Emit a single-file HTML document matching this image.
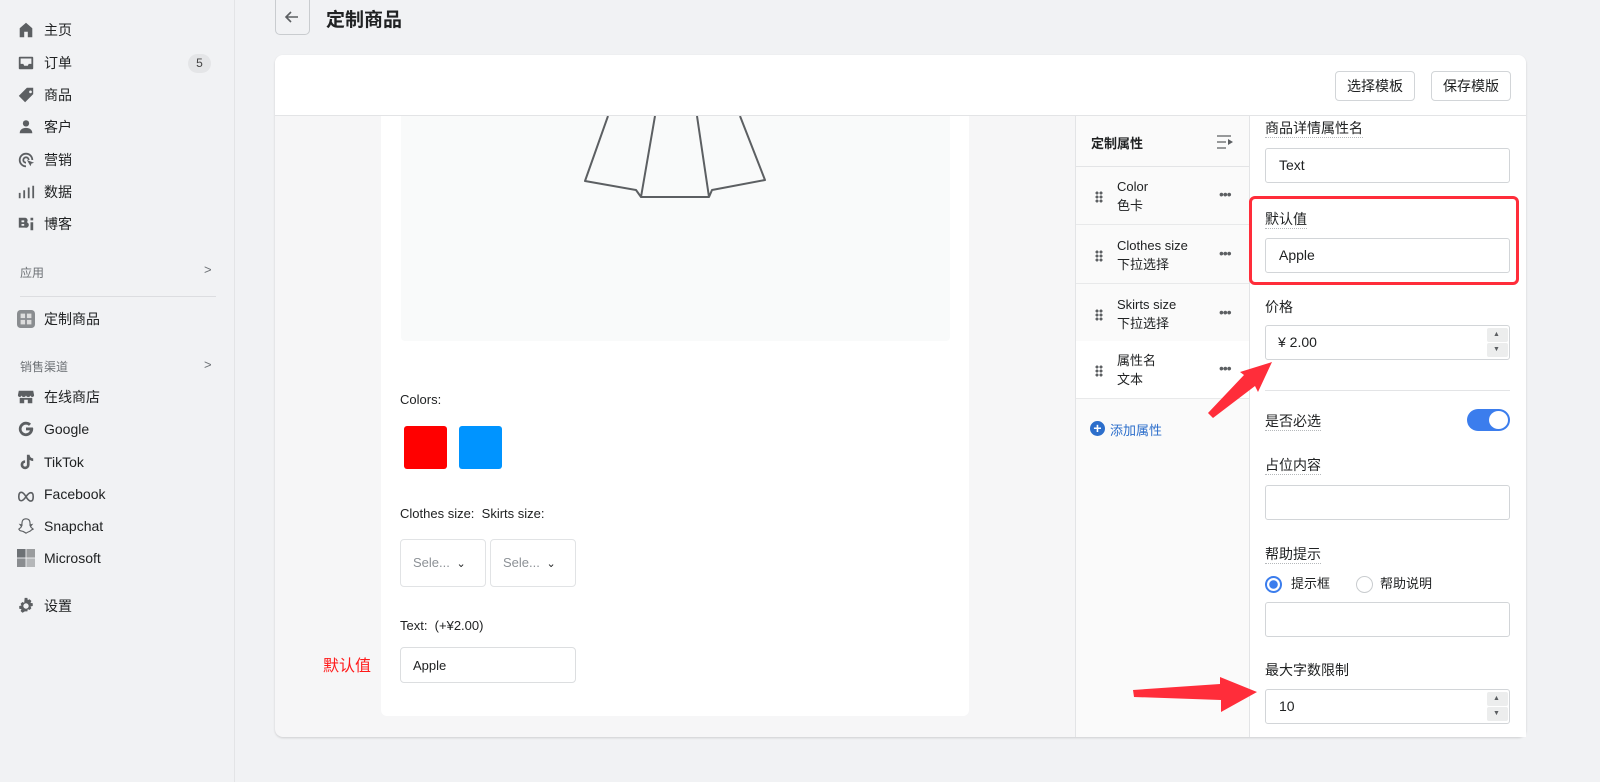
<!DOCTYPE html>
<html><head><meta charset="utf-8">
<style>
*{box-sizing:border-box;margin:0;padding:0}
body{width:1600px;height:782px;background:#f1f2f4;font-family:"Liberation Sans","Noto Sans CJK SC",sans-serif;font-size:14px;color:#202223;position:relative;overflow:hidden}
.a{position:absolute}
.nav{left:0;top:0;width:235px;height:782px;border-right:1px solid #e3e4e6;background:#f1f2f4}
.ni{position:absolute;left:17px;height:20px;display:flex;align-items:center;font-size:14px;color:#202223}
.ni svg{width:18px;height:18px;margin-right:9px;fill:#5c5f62}
.sec{position:absolute;left:20px;font-size:12px;color:#6d7175}
.chev{position:absolute;left:204px;font-size:13px;color:#6d7175}
.box{border:1px solid #d2d5d8;border-radius:4px;background:#fff}
.lbl{position:absolute;left:1265px;font-size:14px;color:#202223;border-bottom:1px dotted #b5b8bb;line-height:18px}
.inp{position:absolute;left:1265px;width:245px;height:35px;border:1px solid #d2d5d8;border-radius:3px;background:#fff;font-size:14px;padding-left:13px;line-height:33px}
.row{position:absolute;left:1076px;width:173px;height:58px;border-bottom:1px solid #e8e9ea;background:#fafafa}
.row .t{position:absolute;left:41px;top:10px;font-size:13px;line-height:19px;color:#202223}
.row .d{position:absolute;left:19px;top:24px;width:8px;height:12px;background:radial-gradient(circle,#5c5f62 1.4px,transparent 1.6px) 0 0/4px 4px}
.row .m{position:absolute;left:143px;top:19px;font-size:14px;color:#5c5f62;letter-spacing:-1px}
.spin{position:absolute;width:21px;height:14px;background:#eceded;border-radius:2px}
</style></head><body>
<div class="a nav">
 <div class="ni" style="top:20px"><svg viewBox="0 0 20 20"><path d="M10 2 L3 8 V18 H8 V12 H12 V18 H17 V8Z"/></svg>主页</div>
 <div class="ni" style="top:53px"><svg viewBox="0 0 20 20"><path d="M3 3h14a1 1 0 011 1v12a1 1 0 01-1 1H3a1 1 0 01-1-1V4a1 1 0 011-1zm1 2v6h3l1 2h4l1-2h3V5z"/></svg>订单</div>
 <div class="a" style="left:188px;top:54px;width:23px;height:19px;border-radius:10px;background:#e4e5e7;font-size:12px;text-align:center;line-height:19px;color:#444">5</div>
 <div class="ni" style="top:85px"><svg viewBox="0 0 20 20"><path d="M11 2h7v7l-9 9-7-7zm4 3a1.5 1.5 0 100 3 1.5 1.5 0 000-3z"/></svg>商品</div>
 <div class="ni" style="top:117px"><svg viewBox="0 0 20 20"><circle cx="10" cy="6" r="3.5"/><path d="M3 17c0-4 3-6 7-6s7 2 7 6z"/></svg>客户</div>
 <div class="ni" style="top:150px"><svg viewBox="0 0 20 20"><path d="M10 2a8 8 0 018 8h-2a6 6 0 10-6 6v2a8 8 0 010-16zm0 4a4 4 0 014 4h-2a2 2 0 10-2 2v2a4 4 0 010-8zm1 4l8 3-3 1-1 3z"/></svg>营销</div>
 <div class="ni" style="top:182px"><svg viewBox="0 0 20 20"><path d="M2 11h2v6H2zm5-3h2v9H7zm5-3h2v12h-2zm5-2h2v14h-2z"/></svg>数据</div>
 <div class="ni" style="top:214px"><svg viewBox="0 0 20 20"><path d="M2 3h7a3 3 0 012 5 3 3 0 01-2 6H2zm3 3v2h3V6zm0 4v2h3v-2zM15 3h3v3h-3zm0 5h3v9h-3z"/></svg>博客</div>
 <div class="sec" style="top:264px">应用</div><div class="chev" style="top:262px">&gt;</div>
 <div class="a" style="left:20px;top:296px;width:196px;height:1px;background:#dcdde0"></div>
 <div class="ni" style="top:309px"><svg viewBox="0 0 20 20" style="fill:#8a8d90"><rect x="0" y="0" width="20" height="20" rx="4"/><rect x="4" y="4" width="5" height="5" fill="#ddd"/><rect x="11" y="4" width="5" height="5" fill="#ddd"/><rect x="4" y="11" width="5" height="5" fill="#ddd"/><rect x="11" y="11" width="5" height="5" fill="#ddd"/></svg>定制商品</div>
 <div class="sec" style="top:358px">销售渠道</div><div class="chev" style="top:357px">&gt;</div>
 <div class="ni" style="top:387px"><svg viewBox="0 0 20 20"><path d="M2 3h16l1 5c0 1-1 2-2 2s-2-1-2-2c0 1-1 2-2.5 2S10 9 10 8c0 1-1 2-2.5 2S5 9 5 8c0 1-1 2-2 2S1 9 1 8zm1 8h14v6h-5v-4H8v4H3z"/></svg>在线商店</div>
 <div class="ni" style="top:419px"><svg viewBox="0 0 20 20"><path d="M17.6 8.3H10v3.2h4.4A4.8 4.8 0 1110 5.2a4.7 4.7 0 013.3 1.3l2.3-2.3A8 8 0 1018 10c0-.6 0-1.1-.4-1.7z"/></svg>Google</div>
 <div class="ni" style="top:452px"><svg viewBox="0 0 20 20"><path d="M11 2h3a4 4 0 004 4v3a7 7 0 01-4-1.3V13a5 5 0 11-5-5v3a2 2 0 102 2z"/></svg>TikTok</div>
 <div class="ni" style="top:484px"><svg viewBox="0 0 20 20" style="fill:none;stroke:#5c5f62;stroke-width:1.8"><path d="M2 13c0-6 4-7 8 0s8 6 8 0-4-6-8 0-8 6-8 0z"/></svg>Facebook</div>
 <div class="ni" style="top:516px"><svg viewBox="0 0 20 20" style="fill:none;stroke:#5c5f62;stroke-width:1.3"><path d="M10 2c3 0 4.5 2 4.5 5v2l2-.5-1.5 2c1 2 3 2.5 3 3-1 .6-2 .5-2.5 1.5S13 16 10 18c-3-2-3-2-5.5-2.5S3 14 2 13.5c0-.5 2-1 3-3L3.5 8.5l2 .5V7C5.5 4 7 2 10 2z"/></svg>Snapchat</div>
 <div class="ni" style="top:548px"><svg viewBox="0 0 20 20"><rect x="0" y="0" width="9.5" height="9.5" fill="#6d7175"/><rect x="10.5" y="0" width="9.5" height="9.5" fill="#9a9c9e"/><rect x="0" y="10.5" width="9.5" height="9.5" fill="#8a8d90"/><rect x="10.5" y="10.5" width="9.5" height="9.5" fill="#b5b7b9"/></svg>Microsoft</div>
 <div class="ni" style="top:596px"><svg viewBox="0 0 20 20"><path d="M8.5 1h3l.5 2.5 2-1 2 2-1 2 2.5.5v3l-2.5.5 1 2-2 2-2-1-.5 2.5h-3L8 16.5l-2 1-2-2 1-2L2.5 13v-3L5 9.5l-1-2 2-2 2 1zM10 7a3 3 0 100 6 3 3 0 000-6z"/></svg>设置</div>
</div>

<div class="a box" style="left:275px;top:0;width:35px;height:35px;border-radius:0 0 5px 5px;border-top:none;background:#f1f2f4;border-color:#c9cccf"></div>
<svg class="a" style="left:283px;top:8px" width="18" height="18" viewBox="0 0 18 18"><path d="M15 9H3M8 4L3 9l5 5" stroke="#5c5f62" stroke-width="1.6" fill="none"/></svg>
<div class="a" style="left:326px;top:5px;font-size:19px;font-weight:600">定制商品</div>

<div class="a" style="left:275px;top:55px;width:1251px;height:682px;background:#f6f6f7;border-radius:8px;box-shadow:0 1px 2px rgba(0,0,0,.15);overflow:hidden">
 <div class="a" style="left:0;top:0;width:1251px;height:61px;background:#fff;border-bottom:1px solid #e3e4e6"></div>
 <div class="a box" style="left:1060px;top:16px;width:80px;height:30px;text-align:center;line-height:28px;font-size:14px">选择模板</div>
 <div class="a box" style="left:1156px;top:16px;width:80px;height:30px;text-align:center;line-height:28px;font-size:14px">保存模版</div>
 <div class="a" style="left:106px;top:61px;width:588px;height:600px;background:#fff;border-radius:0 0 6px 6px"></div>
 <div class="a" style="left:126px;top:61px;width:549px;height:225px;background:#f9fafa;border-radius:0 0 4px 4px"></div>
 <svg class="a" style="left:126px;top:61px" width="549" height="90" viewBox="0 0 549 90"><g stroke="#5c5f62" stroke-width="2" fill="none" stroke-linejoin="round"><path d="M207 0L184 65L235 74L240 81L308 81L311 74L364 64L339 0"/><path d="M254 0L240 81M296 0L308 81"/></g></svg>
 <div class="a" style="left:125px;top:337px;font-size:13px">Colors:</div>
 <div class="a" style="left:129px;top:371px;width:43px;height:43px;background:#ff0000;border-radius:3px"></div>
 <div class="a" style="left:184px;top:371px;width:43px;height:43px;background:#0094ff;border-radius:3px"></div>
 <div class="a" style="left:125px;top:451px;font-size:13px">Clothes size:&nbsp;&nbsp;Skirts size:</div>
 <div class="a box" style="left:125px;top:484px;width:86px;height:48px;border-color:#e1e3e5;color:#8c9196;font-size:13px;padding:15px 0 0 12px">Sele... <span style="color:#202223;font-size:11px;margin-left:3px">&#8964;</span></div>
 <div class="a box" style="left:215px;top:484px;width:86px;height:48px;border-color:#e1e3e5;color:#8c9196;font-size:13px;padding:15px 0 0 12px">Sele... <span style="color:#202223;font-size:11px;margin-left:3px">&#8964;</span></div>
 <div class="a" style="left:125px;top:563px;font-size:13px">Text:&nbsp;&nbsp;(+¥2.00)</div>
 <div class="a box" style="left:125px;top:592px;width:176px;height:36px;border-color:#dcdee0;font-size:13px;padding:10px 0 0 12px">Apple</div>
 <div class="a" style="left:48px;top:597px;font-size:16px;color:#ff1a1a">默认值</div>
</div>

<div class="a" style="left:1075px;top:116px;width:1px;height:621px;background:#e3e4e6"></div>
<div class="a" style="left:1076px;top:116px;width:173px;height:621px;background:#fafafa"></div>
<div class="a" style="left:1249px;top:116px;width:277px;height:621px;background:#fff;border-left:1px solid #e3e4e6"></div>
<div class="a" style="left:1076px;top:116px;width:173px;height:51px;border-bottom:1px solid #e3e4e6"></div>
<div class="a" style="left:1091px;top:133px;font-size:13px;font-weight:600">定制属性</div>
<svg class="a" style="left:1216px;top:134px" width="18" height="16" viewBox="0 0 18 16"><path d="M1 2h14M1 8h9M1 14h9" stroke="#5c5f62" stroke-width="1.3"/><path d="M12 5l5 3-5 3z" fill="#5c5f62"/></svg>
<div class="row" style="top:167px"><div class="d"></div><div class="t">Color<br>色卡</div><div class="m">•••</div></div>
<div class="row" style="top:226px"><div class="d"></div><div class="t">Clothes size<br>下拉选择</div><div class="m">•••</div></div>
<div class="row" style="top:285px"><div class="d"></div><div class="t">Skirts size<br>下拉选择</div><div class="m">•••</div></div>
<div class="row" style="top:341px;background:#fff;height:58px"><div class="d"></div><div class="t">属性名<br>文本</div><div class="m">•••</div></div>
<div class="a" style="left:1090px;top:421px;width:15px;height:15px;border-radius:50%;background:#2c6ecb;color:#fff;font-size:14px;line-height:14px;text-align:center;font-weight:bold">+</div>
<div class="a" style="left:1110px;top:420px;font-size:13px;color:#2c6ecb">添加属性</div>

<div class="lbl" style="top:119px">商品详情属性名</div>
<div class="inp" style="top:148px">Text</div>
<div class="a" style="left:1249px;top:196px;width:270px;height:89px;border:3px solid #ff2d3a;border-radius:6px"></div>
<div class="lbl" style="top:210px">默认值</div>
<div class="inp" style="top:238px">Apple</div>
<div class="lbl" style="top:298px;border:none">价格</div>
<div class="inp" style="top:325px;padding-left:12px">¥ 2.00</div>
<div class="spin" style="left:1487px;top:328px"></div><div class="spin" style="left:1487px;top:343px"></div>
<div class="a" style="left:1493px;top:331px;font-size:7px;color:#5c5f62">▲</div><div class="a" style="left:1493px;top:346px;font-size:7px;color:#5c5f62">▼</div>
<div class="a" style="left:1265px;top:390px;width:245px;height:1px;background:#e3e4e6"></div>
<div class="lbl" style="top:412px">是否必选</div>
<div class="a" style="left:1467px;top:409px;width:43px;height:22px;border-radius:11px;background:#3b7ded"></div>
<div class="a" style="left:1489px;top:411px;width:19px;height:18px;border-radius:50%;background:#fff"></div>
<div class="lbl" style="top:456px">占位内容</div>
<div class="inp" style="top:485px"></div>
<div class="lbl" style="top:545px">帮助提示</div>
<div class="a" style="left:1265px;top:576px;width:17px;height:17px;border-radius:50%;border:2px solid #3b7ded;background:radial-gradient(circle,#3b7ded 4px,#fff 4.5px)"></div>
<div class="a" style="left:1291px;top:575px;font-size:13px;line-height:18px">提示框</div>
<div class="a" style="left:1356px;top:576px;width:17px;height:17px;border-radius:50%;border:1px solid #c9cccf;background:#fff"></div>
<div class="a" style="left:1380px;top:575px;font-size:13px;line-height:18px">帮助说明</div>
<div class="inp" style="top:602px"></div>
<div class="lbl" style="top:661px;border:none">最大字数限制</div>
<div class="inp" style="top:689px">10</div>
<div class="spin" style="left:1487px;top:692px"></div><div class="spin" style="left:1487px;top:707px"></div>
<div class="a" style="left:1493px;top:695px;font-size:7px;color:#5c5f62">▲</div><div class="a" style="left:1493px;top:710px;font-size:7px;color:#5c5f62">▼</div>

<svg class="a" style="left:0;top:0" width="1600" height="782"><g fill="#ff2d3a"><path d="M1208 413L1244 375L1240 372L1272 362L1258 392L1255 386L1213 418Z"/><path d="M1133 690L1220 684L1220 677L1257 692L1221 712L1221 700L1134 697Z"/></g></svg>
</body></html>
